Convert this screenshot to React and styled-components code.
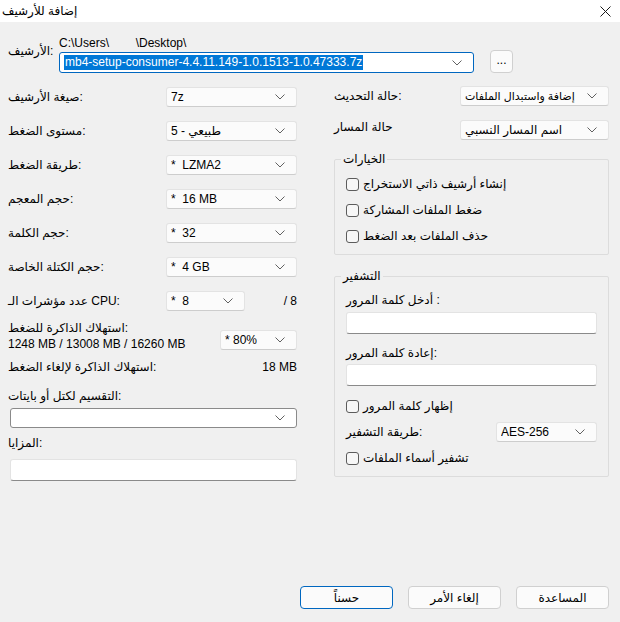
import styled, { createGlobalStyle } from "styled-components";

const GlobalStyle = createGlobalStyle`
  html, body {
    margin: 0;
    padding: 0;
    background: #f0f0f0;
  }
  body {
    font-family: "Liberation Sans", "DejaVu Sans", sans-serif;
    font-size: 12px;
    color: #000;
  }
`;

function Chevron() {
  return (
    <svg width="10" height="6" viewBox="0 0 10 6">
      <path d="M0.5 0.5 L5 5 L9.5 0.5" fill="none" stroke="#616161" strokeWidth="1" />
    </svg>
  );
}

function Combo({ width, value, focused, editable, selected, small }) {
  return (
    <ComboBox $width={width} $focused={focused} $editable={editable}>
      {selected ? (
        <Selected>{value}</Selected>
      ) : (
        <ComboText $small={small}>{value}</ComboText>
      )}
      <Chevron />
    </ComboBox>
  );
}

function Check({ label }) {
  return (
    <CheckRow>
      <CheckBox />
      <span>{label}</span>
    </CheckRow>
  );
}

function App() {
  return (
    <Window>
      <GlobalStyle />
      <TitleBar>
        <TitleText>إضافة للأرشيف</TitleText>
        <svg width="11" height="11" viewBox="0 0 11 11">
          <path d="M0.5 0.5 L10.5 10.5 M10.5 0.5 L0.5 10.5" stroke="#1a1a1a" strokeWidth="1" />
        </svg>
      </TitleBar>

      <ArchiveRow>
        <ArchiveLabel>الأرشيف:</ArchiveLabel>
        <ArchiveCol>
          <PathText>{"C:\\Users\\        \\Desktop\\"}</PathText>
          <Combo width={415} focused selected value="mb4-setup-consumer-4.4.11.149-1.0.1513-1.0.47333.7z" />
        </ArchiveCol>
        <BrowseBtn>...</BrowseBtn>
      </ArchiveRow>

      <Columns>
        <LeftCol>
          <Row>
            <Label $w={158}>صيغة الأرشيف:</Label>
            <Combo width={131} value="7z" />
          </Row>
          <Row>
            <Label $w={158}>مستوى الضغط:</Label>
            <Combo width={131} value="طبيعي - 5" />
          </Row>
          <Row>
            <Label $w={158}>طريقة الضغط:</Label>
            <Combo width={131} value="*  LZMA2" />
          </Row>
          <Row>
            <Label $w={158}>حجم المعجم:</Label>
            <Combo width={131} value="*  16 MB" />
          </Row>
          <Row>
            <Label $w={158}>حجم الكلمة:</Label>
            <Combo width={131} value="*  32" />
          </Row>
          <Row>
            <Label $w={158}>حجم الكتلة الخاصة:</Label>
            <Combo width={131} value="*  4 GB" />
          </Row>
          <Row>
            <Label $w={158}>عدد مؤشرات الـ CPU:</Label>
            <Combo width={79} value="*  8" />
            <Trail>/ 8</Trail>
          </Row>
          <MemoryRow>
            <MemoryText>
              <div>استهلاك الذاكرة للضغط:</div>
              <div>1248 MB / 13008 MB / 16260 MB</div>
            </MemoryText>
            <MemoryCombo>
              <Combo width={77} value="* 80%" />
            </MemoryCombo>
          </MemoryRow>
          <InfoRow>
            <span>استهلاك الذاكرة لإلغاء الضغط:</span>
            <span>18 MB</span>
          </InfoRow>
          <FieldLabel $top={15}>التقسيم لكتل أو بايتات:</FieldLabel>
          <WideField $top={5}>
            <Combo width={287} editable value="" />
          </WideField>
          <FieldLabel $top={8}>المزايا:</FieldLabel>
          <TextBox $top={9} $width={287} $indent={2} />
        </LeftCol>

        <RightCol>
          <Row>
            <Label $w={126}>حالة التحديث:</Label>
            <Combo width={149} small value="إضافة واستبدال الملفات" />
          </Row>
          <Row>
            <Label $w={126} $raise>حالة المسار</Label>
            <Combo width={149} value="اسم المسار النسبي" />
          </Row>

          <Group $top={12}>
            <Legend>الخيارات</Legend>
            <GroupBody>
              <Check label="إنشاء أرشيف ذاتي الاستخراج" />
              <Check label="ضغط الملفات المشاركة" />
              <Check label="حذف الملفات بعد الضغط" />
            </GroupBody>
          </Group>

          <Group $top={14}>
            <Legend>التشفير</Legend>
            <EncBody>
              <FieldLabel $top={10}>أدخل كلمة المرور :</FieldLabel>
              <TextBox $top={5} $width={251} />
              <FieldLabel $top={12}>إعادة كلمة المرور:</FieldLabel>
              <TextBox $top={4} $width={251} />
              <Spaced $top={12}>
                <Check label="إظهار كلمة المرور" />
              </Spaced>
              <MethodRow>
                <Label $w={150}>طريقة التشفير:</Label>
                <Combo width={101} value="AES-256" />
              </MethodRow>
              <Spaced $top={8}>
                <Check label="تشفير أسماء الملفات" />
              </Spaced>
            </EncBody>
          </Group>
        </RightCol>
      </Columns>

      <Footer>
        <Button $primary>حسناً</Button>
        <Button>إلغاء الأمر</Button>
        <Button>المساعدة</Button>
      </Footer>
    </Window>
  );
}

const Window = styled.div`
  width: 620px;
  height: 622px;
  display: flex;
  flex-direction: column;
  background: #f0f0f0;
  overflow: hidden;
`;

const TitleBar = styled.div`
  height: 22px;
  background: #ffffff;
  display: flex;
  align-items: center;
  justify-content: space-between;
  padding: 0 9px 0 2px;
`;

const TitleText = styled.span`
  font-size: 12px;
`;

const ArchiveRow = styled.div`
  display: flex;
  align-items: flex-start;
  padding: 14px 0 0 8px;
`;

const ArchiveLabel = styled.div`
  width: 51px;
  margin-top: 8px;
  line-height: 14px;
`;

const ArchiveCol = styled.div`
  display: flex;
  flex-direction: column;
  gap: 2px;
`;

const PathText = styled.div`
  white-space: pre;
  line-height: 14px;
`;

const BrowseBtn = styled.button`
  width: 23px;
  height: 23px;
  margin: 14px 0 0 16px;
  padding: 0 0 4px;
  background: #fbfbfb;
  border: 1px solid #d0d0d0;
  border-radius: 4px;
  font-family: inherit;
  font-size: 12px;
  color: #000;
`;

const ComboBox = styled.div`
  box-sizing: border-box;
  width: ${(p) => p.$width}px;
  height: ${(p) => (p.$focused ? 21 : 20)}px;
  display: flex;
  align-items: center;
  justify-content: space-between;
  padding: 0 11px 0 4px;
  background: ${(p) => (p.$focused || p.$editable ? "#ffffff" : "#fbfbfb")};
  border: 1px solid
    ${(p) => (p.$focused ? "#0067c0" : p.$editable ? "#8a8a8a" : "#e3e3e3")};
  border-bottom-color: ${(p) =>
    p.$focused ? "#0067c0" : p.$editable ? "#8a8a8a" : "#cdcdcd"};
  border-radius: 3px;
  flex-shrink: 0;
`;

const ComboText = styled.span`
  white-space: pre;
  overflow: hidden;
  font-size: ${(p) => (p.$small ? 11 : 12)}px;
`;

const Selected = styled.span`
  white-space: pre;
  background: #0078d7;
  color: #ffffff;
  padding: 0 1px;
  line-height: 15px;
`;

const Columns = styled.div`
  display: flex;
  margin-top: 13px;
  padding-left: 8px;
  gap: 37px;
`;

const LeftCol = styled.div`
  width: 289px;
  padding-top: 1px;
  display: flex;
  flex-direction: column;
`;

const RightCol = styled.div`
  width: 275px;
  display: flex;
  flex-direction: column;
`;

const Row = styled.div`
  display: flex;
  align-items: center;
  height: 20px;
  & + & {
    margin-top: 14px;
  }
`;

const Label = styled.span`
  flex: 0 0 ${(p) => p.$w}px;
  white-space: nowrap;
  position: relative;
  top: ${(p) => (p.$raise ? -3 : 0)}px;
`;

const Trail = styled.span`
  margin-left: auto;
`;

const MemoryRow = styled.div`
  display: flex;
  justify-content: space-between;
  margin-top: 9px;
`;

const MemoryText = styled.div`
  line-height: 16px;
`;

const MemoryCombo = styled.div`
  margin-top: 10px;
`;

const InfoRow = styled.div`
  display: flex;
  justify-content: space-between;
  line-height: 14px;
  margin-top: 8px;
`;

const FieldLabel = styled.div`
  line-height: 14px;
  margin-top: ${(p) => p.$top}px;
`;

const WideField = styled.div`
  margin: ${(p) => p.$top}px 0 0 2px;
`;

const TextBox = styled.div`
  box-sizing: border-box;
  width: ${(p) => p.$width}px;
  height: 22px;
  margin-top: ${(p) => p.$top}px;
  margin-left: ${(p) => p.$indent || 0}px;
  background: #ffffff;
  border: 1px solid #e3e3e3;
  border-bottom-color: #8a8a8a;
  border-radius: 3px;
`;

const Group = styled.fieldset`
  margin: ${(p) => p.$top}px 0 0;
  padding: 0 11px 10px;
  border: 1px solid #dcdcdc;
  border-radius: 2px;
  min-width: 0;
`;

const Legend = styled.legend`
  margin-left: -5px;
  padding: 0 2px;
  line-height: 14px;
`;

const GroupBody = styled.div`
  display: flex;
  flex-direction: column;
  gap: 10px;
  padding-top: 10px;
`;

const EncBody = styled.div`
  display: flex;
  flex-direction: column;
`;

const Spaced = styled.div`
  margin-top: ${(p) => p.$top}px;
`;

const MethodRow = styled.div`
  display: flex;
  align-items: center;
  margin-top: 8px;
`;

const CheckRow = styled.label`
  display: flex;
  align-items: center;
  gap: 4px;
  height: 16px;
`;

const CheckBox = styled.span`
  box-sizing: border-box;
  width: 13px;
  height: 13px;
  border: 1px solid #5c5c5c;
  border-radius: 3px;
  background: #f7f7f7;
`;

const Footer = styled.div`
  margin-top: auto;
  display: flex;
  justify-content: flex-end;
  gap: 15px;
  padding: 0 11px 13px 0;
`;

const Button = styled.button`
  box-sizing: border-box;
  width: 93px;
  height: 23px;
  background: #fbfbfb;
  border: 1px solid ${(p) => (p.$primary ? "#0067c0" : "#d0d0d0")};
  border-radius: 4px;
  font-family: inherit;
  font-size: 12px;
  color: #000;
  padding: 0;
`;

export default App;
